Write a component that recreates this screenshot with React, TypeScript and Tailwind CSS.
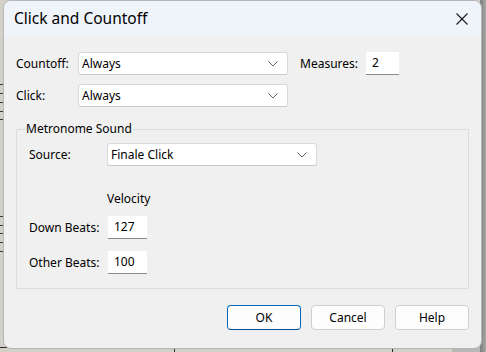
import React from "react";

const font = { fontFamily: '"Segoe UI", "Noto Sans", "Open Sans", sans-serif' };

function Chevron() {
  return (
    <svg width="10" height="6" viewBox="0 0 10 6" className="shrink-0">
      <polyline points="0.5,0.5 5,5 9.5,0.5" fill="none" stroke="#5f5f5f" strokeWidth="1" />
    </svg>
  );
}

function Select({ value, w }: { value: string; w: string }) {
  return (
    <div className={`${w} h-[23px] bg-white border border-[#d9d9d9] border-b-[#c8c8c8] rounded-[3px] flex items-center pl-[3px] pr-[9px] justify-between`}>
      <span className="text-[12px] text-black leading-none">{value}</span>
      <Chevron />
    </div>
  );
}

function Field({ value, w }: { value: string; w: string }) {
  return (
    <div className={`${w} h-[23px] bg-white border-b border-[#8a8a8a] flex items-center pl-[6px]`}>
      <span className="text-[12px] text-black leading-none">{value}</span>
    </div>
  );
}

function Button({ label, primary }: { label: string; primary?: boolean }) {
  return (
    <div
      className={`w-[74px] h-[25px] rounded-[4px] bg-[#fdfdfd] flex items-center justify-center text-[12px] text-black ${
        primary ? "border border-[#0067c0] border-b-[#00509a]" : "border border-[#d0d0d0]"
      }`}
    >
      {label}
    </div>
  );
}

export default function App() {
  const leftLines = [84, 93, 102, 111, 119, 216, 225, 233, 242, 251];
  return (
    <div className="relative w-[486px] h-[352px] overflow-hidden bg-[#d2d0c7]" style={font}>
      {/* score behind */}
      {leftLines.map((y) => (
        <div key={y} className="absolute left-0 w-[4px] h-px bg-[#3a3a3a]" style={{ top: y }} />
      ))}
      <div className="absolute left-0 top-[347px] w-[452px] h-px bg-[#2a2a2a]" />
      <div className="absolute left-[174px] top-[347px] w-px h-[5px] bg-[#2a2a2a]" />
      <div className="absolute left-[392px] top-[347px] w-px h-[5px] bg-[#2a2a2a]" />
      <div className="absolute left-[452px] top-[347px] w-[34px] h-[5px] bg-[#b8b8b8]" />
      <div className="absolute left-[480px] top-0 w-[6px] h-[352px] bg-gradient-to-r from-[#7d7d7d] to-[#a8a8a8]" />

      {/* dialog */}
      <div className="relative ml-[3px] w-[479px] h-[349px] rounded-[8px] border border-[#b5b5b5] bg-[#f0f0f0] overflow-hidden flex flex-col">
        <div className="h-[36px] bg-[#eff3fa] flex items-center justify-between pl-[10px] pr-[13px] shrink-0">
          <span className="text-[15.5px] text-black leading-none">Click and Countoff</span>
          <svg width="12" height="12" viewBox="0 0 12 12">
            <line x1="0.5" y1="0.5" x2="11.5" y2="11.5" stroke="#1a1a1a" strokeWidth="1.1" />
            <line x1="11.5" y1="0.5" x2="0.5" y2="11.5" stroke="#1a1a1a" strokeWidth="1.1" />
          </svg>
        </div>

        <div className="flex flex-col pl-[12px] pt-[15px] text-[12px] text-black">
          <div className="flex items-center h-[23px]">
            <span className="w-[62px]">Countoff:</span>
            <Select value="Always" w="w-[210px]" />
            <span className="ml-[12px] w-[66px]">Measures:</span>
            <Field value="2" w="w-[33px]" />
          </div>
          <div className="flex items-center h-[23px] mt-[9px]">
            <span className="w-[62px]">Click:</span>
            <Select value="Always" w="w-[210px]" />
          </div>

          <div className="relative mt-[22px] w-[453px] h-[160px] border border-[#dcdcdc] rounded-[1px] pl-[12px]">
            <span className="absolute left-[8px] top-[-9px] px-[1px] bg-[#f0f0f0] leading-[16px]">Metronome Sound</span>
            <div className="flex items-center h-[23px] mt-[13px]">
              <span className="w-[78px]">Source:</span>
              <Select value="Finale Click" w="w-[210px]" />
            </div>
            <div className="ml-[78px] mt-[25px] leading-[16px]">Velocity</div>
            <div className="flex items-center h-[23px] mt-[9px]">
              <span className="w-[79px]">Down Beats:</span>
              <Field value="127" w="w-[39px]" />
            </div>
            <div className="flex items-center h-[23px] mt-[12px]">
              <span className="w-[79px]">Other Beats:</span>
              <Field value="100" w="w-[39px]" />
            </div>
          </div>

          <div className="flex justify-end gap-[10px] mt-[16px] w-[453px]">
            <Button label="OK" primary />
            <Button label="Cancel" />
            <Button label="Help" />
          </div>
        </div>
      </div>
    </div>
  );
}
